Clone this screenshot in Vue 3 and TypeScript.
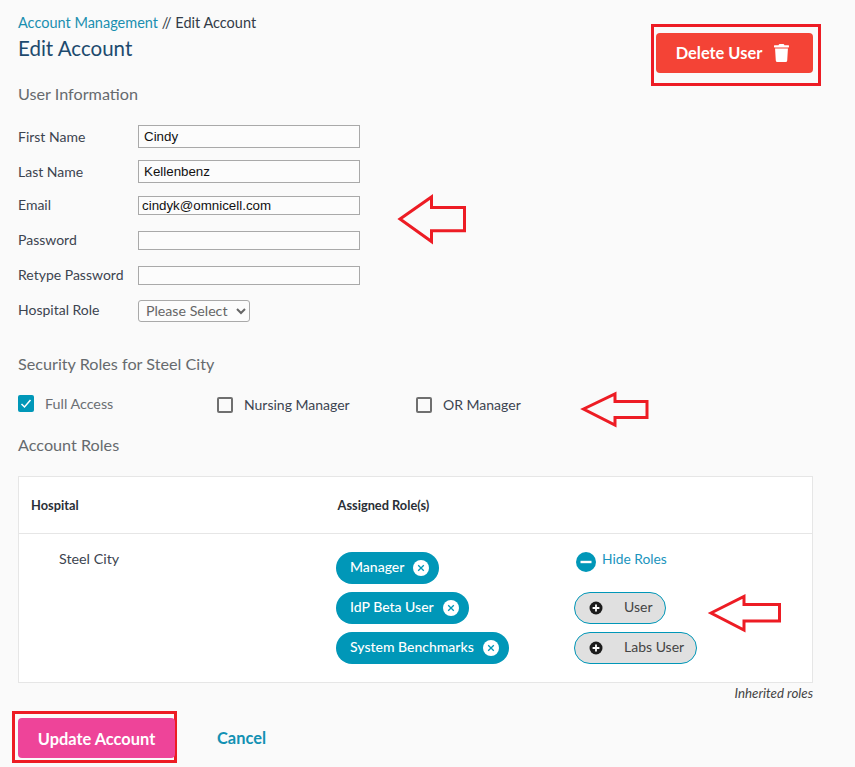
<script setup lang="ts">
interface Field { label: string; value: string; cls: string }
const fields: Field[] = [
  { label: 'First Name', value: 'Cindy', cls: 'tall first' },
  { label: 'Last Name', value: 'Kellenbenz', cls: 'tall' },
  { label: 'Email', value: 'cindyk@omnicell.com', cls: 'short' },
  { label: 'Password', value: '', cls: 'short wide-gap' },
  { label: 'Retype Password', value: '', cls: 'short wide-gap' },
]
const securityRoles = [
  { label: 'Full Access', checked: true },
  { label: 'Nursing Manager', checked: false },
  { label: 'OR Manager', checked: false },
]
const assigned = ['Manager', 'IdP Beta User', 'System Benchmarks']
const available = ['User', 'Labs User']
const arrows = [
  { cls: 'a1', w: 72, h: 52, points: '4,25 35.5,3 35.5,13.5 68.5,13.5 68.5,36.7 35.5,36.7 35.5,47.5' },
  { cls: 'a2', w: 72, h: 40, points: '4.5,18 36,3 36,10.5 68,10.5 68,26.5 36,26.5 36,34' },
  { cls: 'a3', w: 76, h: 40, points: '4,19 37,2.5 37,10.5 72.5,10.5 72.5,27 37,27 37,36' },
]
</script>

<template>
  <main class="page">
    <header class="head">
      <div>
        <nav class="crumbs"><a class="crumb-link">Account Management</a> // Edit Account</nav>
        <h1 class="title">Edit Account</h1>
      </div>
      <div class="annotated delete-mark">
        <button class="btn delete" type="button">
          <span class="lift">Delete User</span>
          <svg class="trash" viewBox="0 0 448 512" preserveAspectRatio="none" aria-hidden="true">
            <path fill="currentColor" d="M432 32H312l-9.4-18.7A24 24 0 0 0 281.1 0H166.8a23.72 23.72 0 0 0-21.4 13.3L136 32H16A16 16 0 0 0 0 48v32a16 16 0 0 0 16 16h416a16 16 0 0 0 16-16V48a16 16 0 0 0-16-16zM53.2 467a48 48 0 0 0 47.9 45h245.8a48 48 0 0 0 47.9-45L416 128H32z" />
          </svg>
        </button>
      </div>
    </header>

    <h2 class="section user-info">User Information</h2>

    <form class="form" @submit.prevent>
      <div v-for="f in fields" :key="f.label" class="row" :class="f.cls">
        <label class="label">{{ f.label }}</label>
        <input class="input" type="text" :value="f.value" />
      </div>
      <div class="row select-row">
        <label class="label">Hospital Role</label>
        <select class="select"><option>Please Select</option></select>
      </div>
    </form>

    <h2 class="section security">Security Roles for Steel City</h2>

    <div class="checks">
      <div v-for="r in securityRoles" :key="r.label" class="check" :class="{ on: r.checked }">
        <span class="box">
          <svg v-if="r.checked" viewBox="0 0 16 16" class="tick" aria-hidden="true">
            <path d="M3.5 8.5l3 3 6-7" fill="none" stroke="#fff" stroke-width="1.5" />
          </svg>
        </span>
        <span>{{ r.label }}</span>
      </div>
    </div>

    <h2 class="section roles-title">Account Roles</h2>

    <section class="table">
      <div class="thead">
        <span class="th hospital">Hospital</span>
        <span class="th">Assigned Role(s)</span>
      </div>
      <div class="tbody">
        <div class="hospital-name">Steel City</div>
        <div class="pills">
          <span v-for="a in assigned" :key="a" class="pill">
            <span class="lift2">{{ a }}</span>
            <svg class="x" viewBox="0 0 16 16" aria-hidden="true">
              <circle cx="8" cy="8" r="8" fill="#fff" />
              <path d="M5.2 5.2l5.6 5.6M10.8 5.2l-5.6 5.6" stroke="#0097b8" stroke-width="1.3" />
            </svg>
          </span>
        </div>
        <div class="avail">
          <div class="hide">
            <svg class="minus" viewBox="0 0 20 20" aria-hidden="true">
              <circle cx="10" cy="10" r="10" fill="#0097b8" />
              <rect x="4.5" y="8.8" width="11" height="2.4" fill="#fff" />
            </svg>
            <span>Hide Roles</span>
          </div>
          <span v-for="a in available" :key="a" class="pill-add">
            <svg class="plus" viewBox="0 0 14 14" aria-hidden="true">
              <circle cx="7" cy="7" r="6.5" fill="#1c1c1c" />
              <path d="M3.6 7h6.8M7 3.6v6.8" stroke="#fff" stroke-width="1.8" />
            </svg>
            <span class="lift2">{{ a }}</span>
          </span>
        </div>
      </div>
    </section>
    <p class="inherited">Inherited roles</p>

    <footer class="foot">
      <div class="annotated update-mark">
        <button class="btn update" type="button">Update Account</button>
      </div>
      <a class="cancel">Cancel</a>
    </footer>

    <svg
      v-for="a in arrows"
      :key="a.cls"
      class="arrow"
      :class="a.cls"
      :width="a.w"
      :height="a.h"
      :viewBox="`0 0 ${a.w} ${a.h}`"
      aria-hidden="true"
    >
      <polygon :points="a.points" fill="none" stroke="#ed1c24" stroke-width="3" />
    </svg>
  </main>
</template>

<style scoped>
.page {
  position: relative;
  box-sizing: border-box;
  width: 855px;
  height: 767px;
  overflow: hidden;
  padding: 14px 42px 0 18px;
  font-family: Lato, "Open Sans", sans-serif;
  font-size: 14px;
  color: #3c4450;
}
.head { display: flex; justify-content: space-between; align-items: flex-start; height: 62px; }
.crumbs { font-size: 14.5px; line-height: 17px; color: #333c48; }
.crumb-link { color: #1a8fb0; }
.title { margin: 5px 0 0; font-size: 20.5px; line-height: 24px; font-weight: 400; color: #1d4a6e; }
.annotated { box-sizing: border-box; border: 3px solid #ed1c24; position: relative; }
.delete-mark { margin: 10px -8px 0 0; width: 170px; height: 62px; padding: 6px 5px 0 2px; }
.btn {
  display: flex; align-items: center; justify-content: center;
  height: 40px; width: 157px; border: 0; border-radius: 4px;
  color: #fff; font: 700 16.4px Lato, "Open Sans", sans-serif; padding: 0;
}
.delete { background: #f44336; gap: 12px; padding-right: 4px; }
.lift { margin-bottom: 2px; }
.lift2 { margin-bottom: 4px; }
.trash { width: 15px; height: 18px; }
.section { margin: 0; font-size: 16.2px; line-height: 20px; font-weight: 400; color: #666a6e; }
.user-info { margin-top: 8px; }
.form { margin-top: 21px; }
.row { display: flex; align-items: center; }
.label { width: 120px; flex: none; }
.short .label { padding-bottom: 2px; }
.input {
  box-sizing: border-box; width: 222px; border: 1px solid #a9a9a9; background: #fcfcfc;
  color: #111; font: 13.33px "Liberation Sans", Arial, sans-serif; padding: 0 5px; margin: 0; outline: none;
}
.tall { height: 23px; margin-top: 12px; }
.tall .input { height: 23px; }
.first { margin-top: 0; }
.short { height: 19px; margin-top: 13px; }
.short .input { height: 19px; padding: 0 3px; }
.wide-gap { margin-top: 16px; }
.select-row { height: 22px; margin-top: 15px; }
.select-row .label { padding-bottom: 4px; }
.select {
  box-sizing: border-box; width: 112px; height: 22px; border: 1px solid #a9a9a9; border-radius: 3px;
  background: #fcfcfc; color: #666; font: 14.2px Lato, "Open Sans", sans-serif; padding: 0 0 3px 3px; margin: 0;
}
.security { margin-top: 32px; }
.checks { display: flex; margin-top: 19px; height: 20px; }
.check { width: 199px; display: flex; align-items: center; gap: 11px; color: #3c4450; padding-top: 3px; box-sizing: border-box; }
.check.on { color: #6b6f73; padding-top: 0; font-size: 14.3px; }
.box { box-sizing: border-box; width: 16px; height: 16px; border: 2px solid #6f6f6f; border-radius: 2px; flex: none; display: block; }
.on .box { border: 0; background: #0097b8; width: 16px; height: 17px; }
.tick { display: block; width: 16px; height: 17px; }
.roles-title { margin-top: 22px; }
.table {
  box-sizing: border-box; margin-top: 21px; width: 795px; height: 207px;
  background: #fff; border: 1px solid #e6e6e6;
}
.thead { display: flex; align-items: center; height: 57px; border-bottom: 1px solid #e6e6e6; box-sizing: border-box; padding: 0 0 1px 12px; }
.th { font-size: 12.8px; font-weight: 700; color: #2a2f36; }
.hospital { width: 306.5px; }
.tbody { display: flex; }
.hospital-name { width: 317px; padding: 16px 0 0 40px; box-sizing: border-box; line-height: 17px; font-size: 14.3px; }
.pills { display: flex; flex-direction: column; align-items: flex-start; gap: 8px; padding-top: 18px; width: 238px; }
.pill {
  display: flex; align-items: center; box-sizing: border-box; height: 32px; gap: 9px;
  padding: 0 10px 0 14px; border-radius: 16px; background: #0097b8; color: #fff;
  font-weight: 500; font-size: 14px; white-space: nowrap;
}
.x { width: 16px; height: 16px; flex: none; }
.avail { display: flex; flex-direction: column; align-items: flex-start; gap: 8px; padding-top: 16px; }
.hide { display: flex; align-items: flex-start; height: 34px; margin-left: 2px; gap: 6px; color: #1a94bd; line-height: 17px; font-size: 13.8px; }
.minus { width: 20px; height: 20px; flex: none; margin-top: 2px; }
.pill-add {
  display: flex; align-items: center; box-sizing: border-box; height: 32px; padding: 0 12px 0 14px;
  border: 1px solid #0097b8; border-radius: 16px; background: #e0e0e0; color: #444; white-space: nowrap;
}
.plus { width: 14px; height: 14px; flex: none; margin-right: 21px; }
.inherited { margin: 3px 0 0; text-align: right; font-size: 13.3px; line-height: 15px; font-style: italic; color: #444; }
.foot { display: flex; align-items: center; margin-top: 10px; margin-left: -6px; }
.update-mark { width: 165px; height: 52px; padding: 4px 0 0 3px; }
.update { background: #ee4499; }
.cancel { margin-left: 40px; color: #1291b3; font-weight: 700; font-size: 16.4px; }
.arrow { position: absolute; }
.a1 { left: 396px; top: 194px; }
.a2 { left: 579px; top: 391px; }
.a3 { left: 707px; top: 594px; }
</style>

<style>
html, body { background: #fafafa; margin: 0; }
</style>
